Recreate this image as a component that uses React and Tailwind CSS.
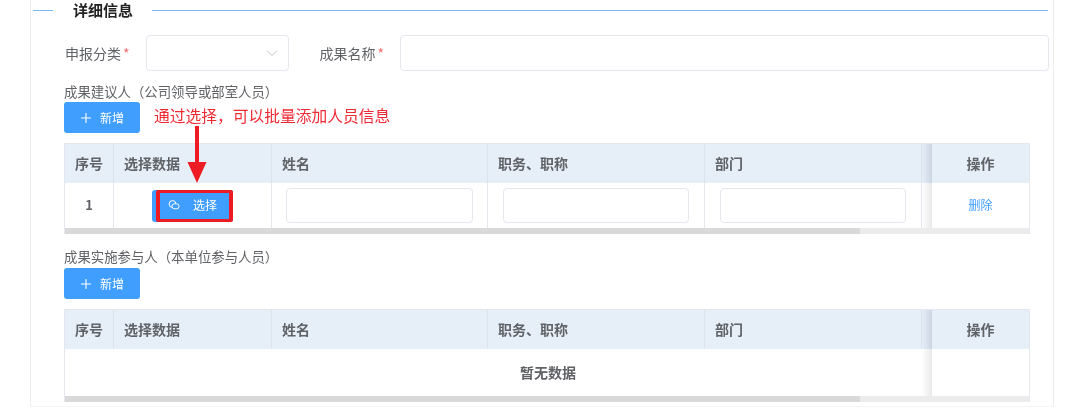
import React from "react";

const cjk = { fontFamily: '"Noto Sans CJK SC", "Noto Sans", sans-serif' };

// -----------------------------
// Small form and table pieces
// -----------------------------
function TextBox({ className }) {
  return <div className={`bg-white border border-[#e4e7ed] rounded-[4px] ${className}`}></div>;
}

function AddButton() {
  return (
    <button className="w-[76px] h-[31px] bg-[#409eff] rounded-[3px] text-white text-[12px] flex items-center pl-[16px]">
      <svg width="12" height="12" viewBox="0 0 12 12" className="mr-[8px]">
        <path d="M6 1v10M1 6h10" stroke="#ffffff" strokeWidth="1.1" fill="none" />
      </svg>
      新增
    </button>
  );
}

function HeadCell({ children, className = "" }) {
  return (
    <div className={`flex items-center text-[14px] font-bold text-[#5f6368] border-r border-[#dde3ec] ${className}`}>
      {children}
    </div>
  );
}

function TableFrame({ bodyHeight, children }) {
  const cols = "grid-cols-[49px_158px_216px_217px_217px_10px_99px]";
  return (
    <div className="w-[966px] ml-[33px] border-l border-r border-t border-[#e4e7ed]">
      <div className={`grid ${cols} h-[39px] bg-[#e6eef8]`}>
        <HeadCell className="justify-center">序号</HeadCell>
        <HeadCell className="pl-[10px]">选择数据</HeadCell>
        <HeadCell className="pl-[10px]">姓名</HeadCell>
        <HeadCell className="pl-[10px]">职务、职称</HeadCell>
        <HeadCell className="pl-[10px]">部门</HeadCell>
        <div className="bg-linear-to-l from-[#cbd5e4] to-[#e6eef8]"></div>
        <HeadCell className="justify-center border-r-0 pr-[2px]">操作</HeadCell>
      </div>
      <div className={`grid ${cols} ${bodyHeight}`}>{children}</div>
      <div className="h-[6px] bg-[#ececec]">
        <div className="w-[795px] h-full bg-[#d9d9d9]"></div>
      </div>
    </div>
  );
}

function ShadowCell() {
  return <div className="bg-linear-to-l from-[#e9e9e9] to-white"></div>;
}

function RowCell({ children, className = "" }) {
  return <div className={`flex items-center border-r border-[#e4e7ed] ${className}`}>{children}</div>;
}

function App() {
  return (
    <div style={cjk} className="w-[1080px] h-[408px] bg-white overflow-hidden relative blur-[0.35px]">
      <div className="ml-[30px] w-[1024px] h-[407px] border-l border-r border-b border-[#ececec] border-b-[#f4f4f4]">
        {/* Section title */}
        <div className="flex items-center h-[20px] pl-[2px]">
          <div className="w-[20px] h-px bg-[#7cbcf5]"></div>
          <span className="ml-[20px] text-[15px] font-bold text-[#222222]">详细信息</span>
          <div className="ml-[19px] w-[896px] h-px bg-[#7cbcf5]"></div>
        </div>

        {/* Form row */}
        <div className="flex items-center mt-[15px] h-[36px] text-[14px] text-[#606266]">
          <span className="ml-[34px] w-[56px]">申报分类</span>
          <span className="ml-[2px] text-[#f56c6c]">*</span>
          <div className="ml-[16px] w-[143px] h-[36px] bg-white border border-[#e4e7ed] rounded-[4px] flex items-center justify-end pr-[10px]">
            <svg width="12" height="12" viewBox="0 0 12 12">
              <path d="M1 3.5l5 5 5-5" stroke="#c0c4cc" strokeWidth="1" fill="none" />
            </svg>
          </div>
          <span className="ml-[31px] w-[56px]">成果名称</span>
          <span className="ml-[2px] text-[#f56c6c]">*</span>
          <TextBox className="ml-[16px] w-[649px] h-[36px]" />
        </div>

        {/* First list */}
        <div className="mt-[11px] h-[20px] pb-[2px] ml-[33px] flex items-center text-[13.4px] text-[#606266]">
          成果建议人（公司领导或部室人员）
        </div>
        <div className="ml-[33px]">
          <AddButton />
        </div>
        <div className="mt-[10px]">
          <TableFrame bodyHeight="h-[45px]">
            <RowCell className="justify-center pb-[1px] text-[13px] font-bold text-[#606266]">1</RowCell>
            <RowCell className="pl-[38px]">
              <button className="w-[81px] h-[32px] pb-[1px] bg-[#409eff] rounded-[3px] text-white text-[12px] flex items-center pl-[16px]">
                <svg width="12" height="10" viewBox="0 0 12 10" className="mr-[13px]">
                  <circle cx="4.5" cy="4" r="3.4" stroke="#ffffff" strokeWidth="1" fill="none" />
                  <rect x="4" y="3.8" width="7" height="5" rx="2.4" stroke="#ffffff" strokeWidth="1" fill="#409eff" />
                </svg>
                选择
              </button>
            </RowCell>
            <RowCell className="pl-[14px]">
              <TextBox className="w-[187px] h-[35px]" />
            </RowCell>
            <RowCell className="pl-[15px]">
              <TextBox className="w-[186px] h-[35px]" />
            </RowCell>
            <RowCell className="pl-[15px]">
              <TextBox className="w-[186px] h-[35px]" />
            </RowCell>
            <ShadowCell />
            <div className="flex items-center justify-center pb-[1px] text-[12px] text-[#409eff] pr-[2px]">删除</div>
          </TableFrame>
        </div>

        {/* Second list */}
        <div className="mt-[13px] h-[20px] pb-[2px] ml-[33px] flex items-center text-[13.4px] text-[#606266]">
          成果实施参与人（本单位参与人员）
        </div>
        <div className="mt-px ml-[33px]">
          <AddButton />
        </div>
        <div className="mt-[10px]">
          <TableFrame bodyHeight="h-[47px]">
            <RowCell className="col-span-5 justify-center border-r-0 pb-[1px] text-[14px] font-bold text-[#606266] pl-[109px]">
              暂无数据
            </RowCell>
            <ShadowCell />
            <div></div>
          </TableFrame>
        </div>
      </div>

      {/* Annotation over the first table */}
      <div className="absolute left-[154px] top-[105px] text-[15.75px] leading-[22px] text-[#ee2a35]">
        通过选择，可以批量添加人员信息
      </div>
      <svg width="24" height="60" viewBox="0 0 24 60" className="absolute left-[185px] top-[124px]">
        <path d="M10 2h4v36h7.5L12 59 2.5 38H10z" fill="#ed1c24" />
      </svg>
      <div className="absolute left-[156px] top-[190px] w-[77px] h-[32px] border-x-[4px] border-y-[3px] border-[#ed1c24] rounded-[2px]"></div>
    </div>
  );
}

export default App;
